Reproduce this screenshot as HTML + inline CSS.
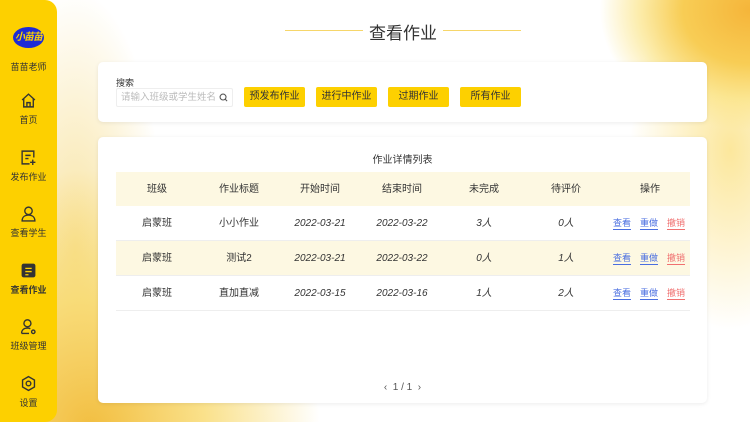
<!DOCTYPE html>
<html><head><meta charset="utf-8"><style>
*{margin:0;padding:0;box-sizing:border-box}
body{width:750px;height:422px;overflow:hidden;position:relative;background:#fff;font-family:"Liberation Sans","Noto Sans CJK SC",sans-serif;color:#333}
.bg{position:absolute;inset:0;background:
radial-gradient(ellipse 150px 120px at 750px 10px,#f5b53a 0%,#f8cd55 45%,rgba(250,225,120,.6) 75%,rgba(255,255,255,0) 100%),
radial-gradient(ellipse 100px 180px at 730px 150px,rgba(250,215,90,.6),rgba(255,255,255,0) 100%),
radial-gradient(ellipse 230px 260px at 90px 430px,#f2be40 0%,rgba(248,215,100,.75) 50%,rgba(255,255,255,0) 100%),
radial-gradient(ellipse 90px 260px at 75px 250px,rgba(245,215,120,.7),rgba(255,255,255,0) 100%)}
.side{position:absolute;left:0;top:0;width:57px;height:422px;background:#fdd000;border-radius:0 12px 12px 0}
.logo{position:absolute;left:13px;top:27px;width:31px;height:21px;border-radius:50%;background:#1d2bd6;color:#fdd200;font-size:10px;font-weight:bold;font-style:italic;text-align:center;line-height:21px;letter-spacing:-1px}
.nm{position:absolute;left:0;width:57px;text-align:center;font-size:9px;color:#333}
.ic{position:absolute;left:20px;width:17px;height:17px}
.title{position:absolute;left:0;width:806px;top:19px;text-align:center;font-size:17px;color:#333}
.ln{position:absolute;top:30px;height:1px;background:#f6d66a;width:78px}
.card{position:absolute;left:98px;width:609px;background:#fff;border-radius:5px;box-shadow:0 1px 4px rgba(0,0,0,.08)}
.btn{position:absolute;top:87px;width:61px;height:20px;background:#fdd000;border-radius:2px;font-size:10px;text-align:center;line-height:20px;color:#333}
.row{position:absolute;left:116px;width:574px;height:35px;border-bottom:1px solid #eee;font-size:10px}
.row span{position:absolute;top:0;line-height:35px;transform:translateX(-50%);white-space:nowrap}
.i{font-style:italic}
.a{font-size:9px;border-bottom:1px solid;line-height:12px!important;top:11px!important}
</style></head><body>
<div class="bg"></div>
<div class="side">
<div class="logo">小苗苗</div>
<div class="nm" style="top:60px">苗苗老师</div>
<svg class="ic" style="top:92px" viewBox="0 0 16 16" fill="none" stroke="#333" stroke-width="1.3"><path d="M2 7.5L8 2l6 5.5M3.5 6.5V14h9V6.5M6.5 14v-4h3v4"/></svg>
<div class="nm" style="top:113px">首页</div>
<svg class="ic" style="top:149px" viewBox="0 0 16 16" fill="none" stroke="#333" stroke-width="1.3"><path d="M13 8V2H2v12h7M5 6h5M5 9h3M12 10v5M9.5 12.5h5"/></svg>
<div class="nm" style="top:170px">发布作业</div>
<svg class="ic" style="top:205px" viewBox="0 0 16 16" fill="none" stroke="#333" stroke-width="1.3"><circle cx="8" cy="5.5" r="3.5"/><path d="M2 15c0-4 3-5.5 6-5.5s6 1.5 6 5.5z"/></svg>
<div class="nm" style="top:226px">查看学生</div>
<svg class="ic" style="top:262px" viewBox="0 0 16 16"><rect x="1.5" y="1.5" width="13" height="13" rx="2" fill="#333"/><path d="M5 6h6M5 9h6M5 12h3" stroke="#fdd200" stroke-width="1.2"/></svg>
<div class="nm" style="top:283px;font-weight:bold">查看作业</div>
<svg class="ic" style="top:318px" viewBox="0 0 16 16" fill="none" stroke="#333" stroke-width="1.3"><circle cx="7" cy="5" r="3.3"/><path d="M1.5 14.5c0-3.5 2.5-5 5.5-5 1 0 2 .2 2.7.6M1.5 14.5h7"/><circle cx="12.5" cy="13" r="1.6"/></svg>
<div class="nm" style="top:339px">班级管理</div>
<svg class="ic" style="top:375px" viewBox="0 0 16 16" fill="none" stroke="#333" stroke-width="1.3"><path d="M8 1.5l5.6 3.2v6.6L8 14.5 2.4 11.3V4.7z"/><circle cx="8" cy="8" r="2.2"/></svg>
<div class="nm" style="top:396px">设置</div>
</div>
<div class="ln" style="left:285px"></div><div class="ln" style="left:443px"></div>
<div class="title">查看作业</div>
<div class="card" style="top:62px;height:60px"></div>
<div style="position:absolute;left:116px;top:76px;font-size:9px">搜索</div>
<div style="position:absolute;left:116px;top:88px;width:117px;height:19px;border:1px solid #eee;border-radius:2px;font-size:9.5px;color:#bbb;line-height:17px;padding-left:4px;overflow:hidden;white-space:nowrap">请输入班级或学生姓名<svg style="position:absolute;right:4px;top:4px;background:#fff" width="9" height="9" viewBox="0 0 10 10" fill="none" stroke="#555" stroke-width="1.2"><circle cx="4.5" cy="4.5" r="3.3"/><path d="M7 7l2 2"/></svg></div>
<div class="btn" style="left:244px">预发布作业</div>
<div class="btn" style="left:316px">进行中作业</div>
<div class="btn" style="left:388px">过期作业</div>
<div class="btn" style="left:460px">所有作业</div>
<div class="card" style="top:137px;height:266px"></div>
<div style="position:absolute;left:98px;width:609px;top:151px;text-align:center;font-size:10px">作业详情列表</div>
<div class="row" style="top:172px;height:34px;background:#fdf8e2;border:none"><span style="left:41px">班级</span><span style="left:123px">作业标题</span><span style="left:204px">开始时间</span><span style="left:286px">结束时间</span><span style="left:368px">未完成</span><span style="left:450px">待评价</span><span style="left:534px">操作</span></div>
<div class="row" style="top:206px"><span style="left:41px">启蒙班</span><span style="left:123px">小小作业</span><span class="i" style="left:204px">2022-03-21</span><span class="i" style="left:286px">2022-03-22</span><span class="i" style="left:368px">3人</span><span class="i" style="left:450px">0人</span><span class="a" style="left:506px;color:#4a6ee0">查看</span><span class="a" style="left:533px;color:#4a6ee0">重做</span><span class="a" style="left:560px;color:#f07070">撤销</span></div>
<div class="row" style="top:241px;background:#fdf8e2"><span style="left:41px">启蒙班</span><span style="left:123px">测试2</span><span class="i" style="left:204px">2022-03-21</span><span class="i" style="left:286px">2022-03-22</span><span class="i" style="left:368px">0人</span><span class="i" style="left:450px">1人</span><span class="a" style="left:506px;color:#4a6ee0">查看</span><span class="a" style="left:533px;color:#4a6ee0">重做</span><span class="a" style="left:560px;color:#f07070">撤销</span></div>
<div class="row" style="top:276px"><span style="left:41px">启蒙班</span><span style="left:123px">直加直减</span><span class="i" style="left:204px">2022-03-15</span><span class="i" style="left:286px">2022-03-16</span><span class="i" style="left:368px">1人</span><span class="i" style="left:450px">2人</span><span class="a" style="left:506px;color:#4a6ee0">查看</span><span class="a" style="left:533px;color:#4a6ee0">重做</span><span class="a" style="left:560px;color:#f07070">撤销</span></div>
<div style="position:absolute;left:98px;width:609px;top:382px;text-align:center;font-size:10px;color:#555">‹&nbsp; 1 / 1 &nbsp;›</div>
</body></html>
